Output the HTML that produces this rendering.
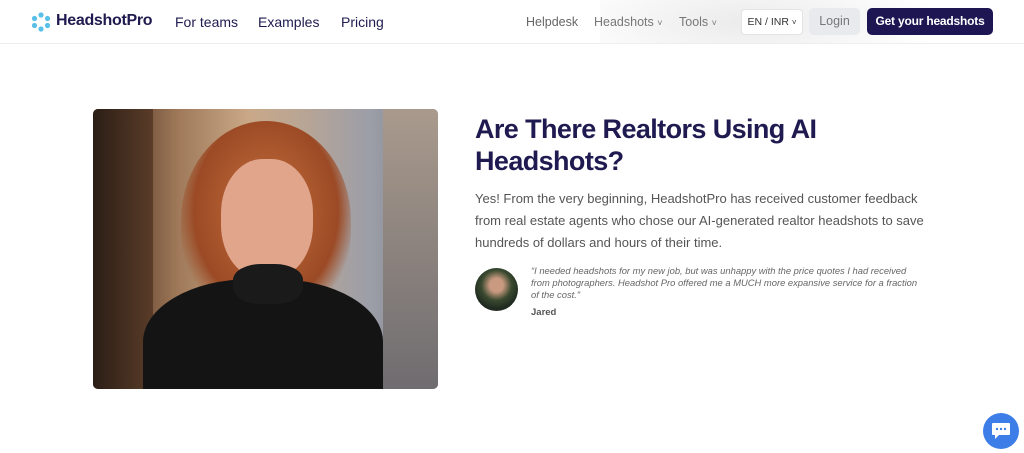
<!DOCTYPE html>
<html><head><meta charset="utf-8"><style>
*{margin:0;padding:0;box-sizing:border-box}
body{width:1024px;height:453px;background:#fff;font-family:"Liberation Sans",sans-serif;position:relative;overflow:hidden}
.nav{position:absolute;left:0;top:0;width:1024px;height:44px;border-bottom:1px solid #eee;overflow:hidden}
.t{position:absolute;white-space:nowrap}
.photo{position:absolute;left:93px;top:109px;width:345px;height:280px;border-radius:5px;overflow:hidden;
background:linear-gradient(90deg,#3a2a20 0%,#6b4a34 12%,#a07a5a 25%,#c9a888 45%,#b7a596 62%,#9c9ea8 80%,#7d8088 100%)}
</style></head><body>
<div class="nav">
<div style="position:absolute;left:600px;top:-40px;width:360px;height:124px;background:radial-gradient(ellipse at 40% 50%,rgba(0,0,0,.08),rgba(0,0,0,0) 65%)"></div>
<svg style="position:absolute;left:31px;top:12px" width="20" height="20" viewBox="0 0 20 20"><g fill="#5bc0e8"><circle cx="10" cy="3" r="2.6"/><circle cx="10" cy="17" r="2.6"/><circle cx="3.5" cy="6.5" r="2.6"/><circle cx="16.5" cy="6.5" r="2.6"/><circle cx="3.5" cy="13.5" r="2.6"/><circle cx="16.5" cy="13.5" r="2.6"/></g></svg>
<div class="t" style="left:56px;top:12px;font-size:16px;font-weight:bold;color:#1f1a4f;letter-spacing:-0.3px">HeadshotPro</div>
<div class="t" style="left:175px;top:14px;font-size:14px;color:#1f1a4f">For teams</div>
<div class="t" style="left:258px;top:14px;font-size:14px;color:#1f1a4f">Examples</div>
<div class="t" style="left:341px;top:14px;font-size:14px;color:#1f1a4f">Pricing</div>
<div class="t" style="left:526px;top:15px;font-size:12.5px;color:#666">Helpdesk</div>
<div class="t" style="left:594px;top:15px;font-size:12.5px;color:#777">Headshots <span style="font-size:9px">˅</span></div>
<div class="t" style="left:679px;top:15px;font-size:12.5px;color:#777">Tools <span style="font-size:9px">˅</span></div>
<div class="t" style="left:741px;top:9px;width:62px;height:26px;background:#fff;border:1px solid #e4e4e8;border-radius:4px;font-size:10.5px;color:#333;line-height:24px;text-align:center">EN / INR <span style="font-size:8px">˅</span></div>
<div class="t" style="left:809px;top:8px;width:51px;height:27px;background:#e9eaee;border-radius:5px;font-size:12.5px;color:#777;line-height:27px;text-align:center">Login</div>
<div class="t" style="left:867px;top:8px;width:126px;height:27px;background:#1e1653;border-radius:5px;font-size:12px;font-weight:bold;color:#fff;line-height:27px;text-align:center;letter-spacing:-0.2px">Get your headshots</div>
</div>
<div class="photo">
<div style="position:absolute;left:0;top:0;width:60px;height:280px;background:linear-gradient(90deg,#2b1e16,#5a3c28)"></div>
<div style="position:absolute;left:290px;top:0;width:55px;height:280px;background:linear-gradient(180deg,#a99a8c,#6f6c70)"></div>
<div style="position:absolute;left:88px;top:12px;width:170px;height:200px;border-radius:50% 50% 45% 45%;background:radial-gradient(ellipse at 50% 45%,#c8703e,#9b4a25 60%,rgba(140,70,40,0) 75%)"></div>
<div style="position:absolute;left:128px;top:50px;width:92px;height:120px;border-radius:45%;background:#e0a58a"></div>
<div style="position:absolute;left:50px;top:170px;width:240px;height:140px;border-radius:45% 45% 0 0;background:#141414"></div>
<div style="position:absolute;left:140px;top:155px;width:70px;height:40px;border-radius:40%;background:#1a1a1a"></div>
</div>
<div class="t" style="left:475px;top:113px;font-size:27px;font-weight:bold;color:#1f1a4f;line-height:32px;letter-spacing:-0.6px">Are There Realtors Using AI<br>Headshots?</div>
<div class="t" style="left:475px;top:188px;font-size:13px;color:#555;line-height:22px">Yes! From the very beginning, HeadshotPro has received customer feedback<br>from real estate agents who chose our AI-generated realtor headshots to save<br>hundreds of dollars and hours of their time.</div>
<div style="position:absolute;left:475px;top:268px;width:43px;height:43px;border-radius:50%;background:radial-gradient(circle at 50% 40%,#c99a80 20%,#3a4a30 45%,#1f2a20 70%)"></div>
<div class="t" style="left:531px;top:265px;font-size:9.4px;font-style:italic;color:#666;line-height:12px">“I needed headshots for my new job, but was unhappy with the price quotes I had received<br>from photographers. Headshot Pro offered me a MUCH more expansive service for a fraction<br>of the cost.”</div>
<div class="t" style="left:531px;top:307px;font-size:9.5px;font-weight:bold;color:#555">Jared</div>
<div style="position:absolute;left:983px;top:413px;width:36px;height:36px;border-radius:50%;background:#3d7de8"></div>
<svg style="position:absolute;left:990px;top:421px" width="22" height="20" viewBox="0 0 22 20"><path d="M3 2h16a1 1 0 0 1 1 1v10a1 1 0 0 1-1 1H9l-4 4v-4H3a1 1 0 0 1-1-1V3a1 1 0 0 1 1-1z" fill="#fff"/><circle cx="7" cy="8" r="1.2" fill="#3d7de8"/><circle cx="11" cy="8" r="1.2" fill="#3d7de8"/><circle cx="15" cy="8" r="1.2" fill="#3d7de8"/></svg>
</body></html>
